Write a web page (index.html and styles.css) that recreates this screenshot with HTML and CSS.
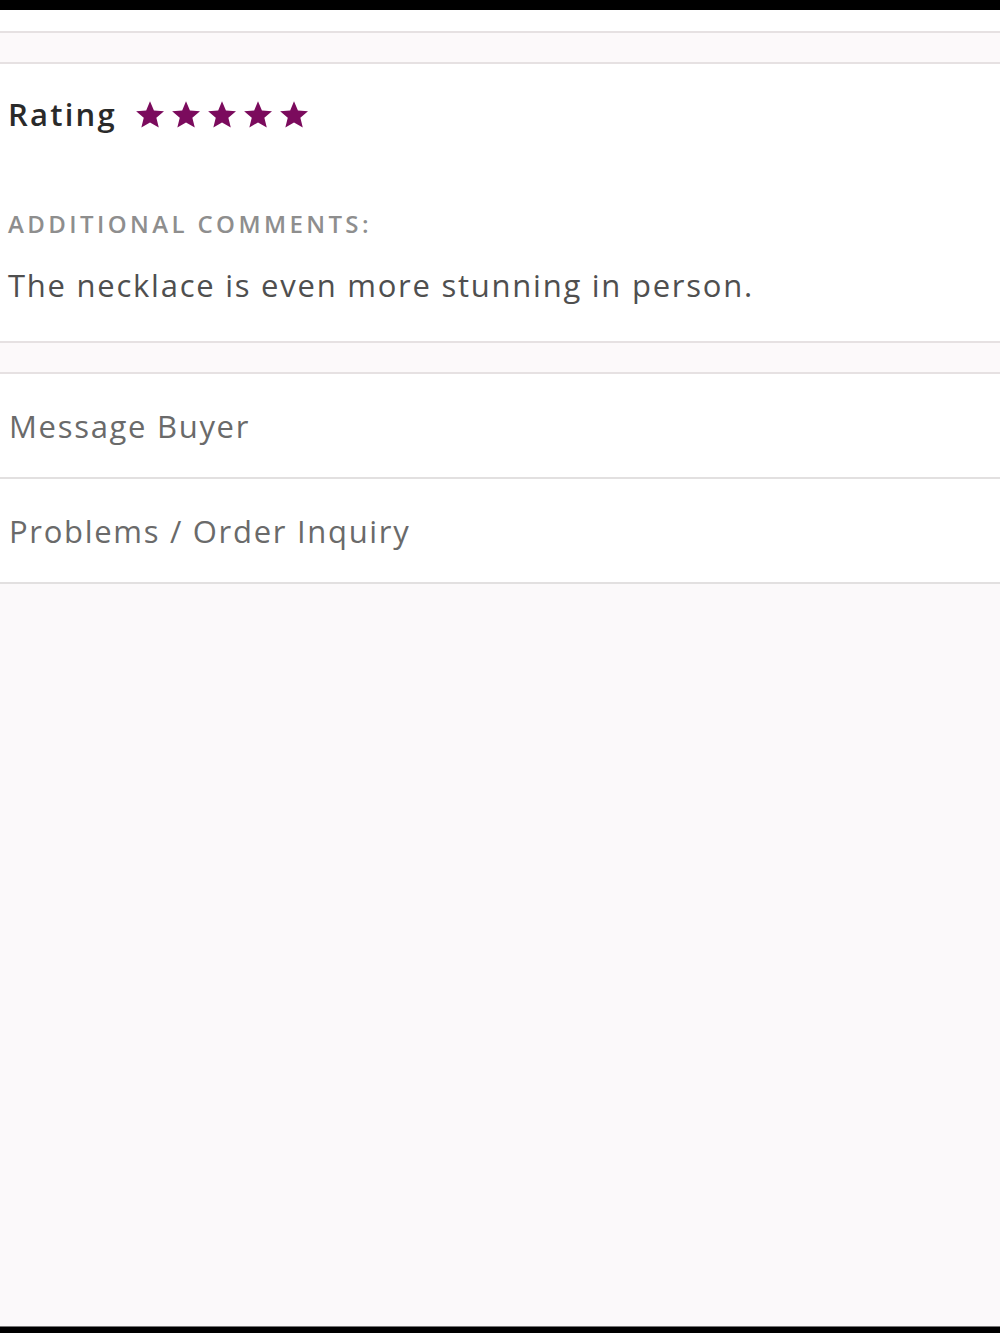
FILE: index.html
```html
<!DOCTYPE html>
<html>
<head>
<meta charset="utf-8">
<link rel="stylesheet" href="styles.css">
</head>
<body>
<div class="page">
  <div class="bar"></div>
  <div class="gap"></div>
  <div class="band"></div>
  <section class="review">
    <div class="rating">
      <span class="rating-label">Rating</span>
      <span class="stars">
        <svg class="star" viewBox="1 1.5 22 21"><path d="M12 1.5l3.1 7.3 7.9.6-6 5.2 1.9 7.7L12 18.2l-6.8 4.1 1.9-7.7-6-5.2 7.9-.6z"/></svg>
        <svg class="star" viewBox="1 1.5 22 21"><path d="M12 1.5l3.1 7.3 7.9.6-6 5.2 1.9 7.7L12 18.2l-6.8 4.1 1.9-7.7-6-5.2 7.9-.6z"/></svg>
        <svg class="star" viewBox="1 1.5 22 21"><path d="M12 1.5l3.1 7.3 7.9.6-6 5.2 1.9 7.7L12 18.2l-6.8 4.1 1.9-7.7-6-5.2 7.9-.6z"/></svg>
        <svg class="star" viewBox="1 1.5 22 21"><path d="M12 1.5l3.1 7.3 7.9.6-6 5.2 1.9 7.7L12 18.2l-6.8 4.1 1.9-7.7-6-5.2 7.9-.6z"/></svg>
        <svg class="star" viewBox="1 1.5 22 21"><path d="M12 1.5l3.1 7.3 7.9.6-6 5.2 1.9 7.7L12 18.2l-6.8 4.1 1.9-7.7-6-5.2 7.9-.6z"/></svg>
      </span>
    </div>
    <div class="comments-label">ADDITIONAL COMMENTS:</div>
    <p class="comments">The necklace is even more stunning in person.</p>
  </section>
  <div class="band"></div>
  <div class="row">Message Buyer</div>
  <div class="row">Problems / Order Inquiry</div>
  <div class="filler"></div>
  <div class="bar bottom"></div>
</div>
</body>
</html>
```
FILE: styles.css
```css
html, body {
  margin: 0;
  padding: 0;
}
body {
  background: #fbf9fa;
  font-family: "Open Sans", "Noto Sans", sans-serif;
}
.page {
  min-height: 1333px;
  display: flex;
  flex-direction: column;
}
.bar {
  height: 10px;
  background: #000;
}
.bar.bottom {
  height: 6px;
  border-top: 1px solid #777;
}
.gap {
  height: 21px;
  background: #fff;
}
.band {
  height: 29px;
  background: #fcf9fa;
  border-top: 2px solid #e6e1e2;
  border-bottom: 2px solid #e6e1e2;
}
.review {
  background: #fff;
  padding: 30px 8px 36px;
}
.rating {
  display: flex;
  align-items: center;
  height: 40px;
}
.rating-label {
  font-size: 31px;
  color: #2a2a2a;
  font-weight: 600;
  letter-spacing: 2.2px;
}
.stars {
  display: flex;
  margin-left: 19px;
  gap: 8px;
}
.star {
  width: 28px;
  height: 27px;
  fill: #7b0b5d;
}
.comments-label {
  margin-top: 75px;
  font-size: 24px;
  line-height: 30px;
  font-weight: 600;
  color: #8e8e8e;
  letter-spacing: 3.4px;
}
.comments {
  margin: 26px 0 0;
  font-size: 31px;
  line-height: 40px;
  color: #4f4f4f;
  letter-spacing: 1.75px;
}
.row {
  height: 103px;
  background: #fff;
  border-bottom: 2px solid #e2e0e0;
  display: flex;
  align-items: center;
  padding-left: 9px;
  font-size: 31px;
  color: #6a6a6a;
  letter-spacing: 1.7px;
}
.filler {
  flex: 1;
}
```
